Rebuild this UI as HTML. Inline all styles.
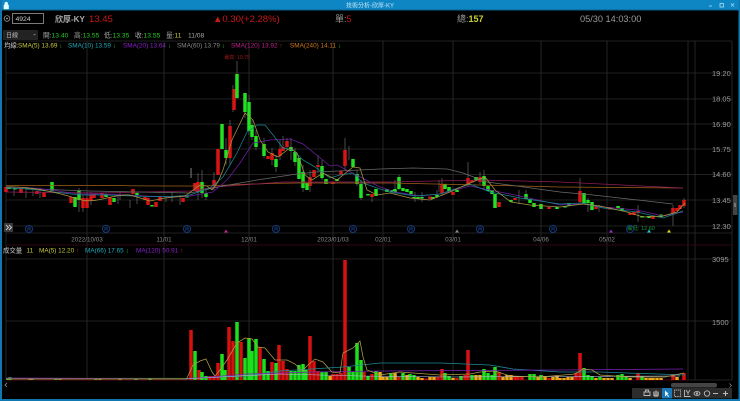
<!DOCTYPE html>
<html><head><meta charset="utf-8"><style>
html,body{margin:0;padding:0;background:#000;width:740px;height:401px;overflow:hidden}
svg{display:block;filter:blur(.35px)}
text{font-family:"Liberation Sans","Noto Sans CJK TC",sans-serif}
</style></head><body>
<svg width="740" height="401" viewBox="0 0 740 401" xmlns="http://www.w3.org/2000/svg">
<rect width="740" height="401" fill="#000"/>
<!-- window frame -->
<rect x="0" y="0" width="740" height="10" fill="#0f86c4"/>
<rect x="0" y="9.500" width="740" height="1" fill="#0a5f8c"/>
<rect x="0" y="0" width="2" height="401" fill="#0f78b0"/>
<rect x="738.500" y="0" width="1.500" height="401" fill="#0f78b0"/>
<rect x="0" y="399" width="740" height="2" fill="#0f78b0"/>
<path d="M4 5h4.500v4h-4.500zM4.900 5V3.500a1.300 1.300 0 0 1 2.700 0V5" fill="#dff" stroke="#dff" stroke-width=".6"/>
<text x="370" y="7.500" font-size="6" fill="#bfe4f5" text-anchor="middle">技術分析-欣厚-KY</text>
<path d="M709 6h3M720 3.500h3.500v3.500h-3.500zM731 3.500l3 3M734 3.500l-3 3" stroke="#bfe4f5" stroke-width=".7" fill="none"/>
<!-- header -->
<circle cx="7" cy="18.500" r="2.800" fill="none" stroke="#aaa" stroke-width=".7"/><circle cx="7" cy="18.500" r=".9" fill="#aaa"/>
<rect x="12.500" y="13.500" width="31" height="10" fill="#000" stroke="#999" stroke-width=".8"/>
<text x="15.500" y="21" font-size="6.800" fill="#ccc">4924</text>
<text x="55" y="21.800" font-size="8" font-weight="bold" fill="#aaa">欣厚-KY</text>
<text x="89" y="22" font-size="9.500" fill="#c81818">13.45</text>
<text x="213" y="22" font-size="9.500" fill="#c81818">▲0.30(+2.28%)</text>
<text x="335" y="22" font-size="9" fill="#999">單:<tspan fill="#c81818">5</tspan></text>
<text x="457" y="22" font-size="9" fill="#999">總:<tspan fill="#c8d030" font-weight="bold">157</tspan></text>
<text x="580" y="22" font-size="9.200" fill="#999">05/30 14:03:00</text>
<!-- row 2 -->
<rect x="3.500" y="30.500" width="34" height="9" fill="#222" stroke="#333" stroke-width=".6"/>
<text x="6" y="37.500" font-size="6" fill="#bbb">日線</text><path d="M33 34l1.500 1.500 1.500-1.500z" fill="#777"/>
<g font-size="6.700">
<text x="43" y="37.500" fill="#aaa">開:<tspan fill="#28c828">13.40</tspan></text>
<text x="74" y="37.500" fill="#aaa">高:<tspan fill="#28c828">13.55</tspan></text>
<text x="104" y="37.500" fill="#aaa">低:<tspan fill="#28c828">13.35</tspan></text>
<text x="135" y="37.500" fill="#aaa">收:<tspan fill="#28c828">13.55</tspan></text>
<text x="166" y="37.500" fill="#aaa">量:<tspan fill="#c8d030">11</tspan></text>
<text x="188" y="37.500" fill="#aaa">11/08</text>
</g>
<!-- grid -->
<path d="M6 41H732M6 73H732M6 99H732M6 124H732M6 149H732M6 174.500H732M6 200H732M6 226H732M6 233H732M6 259H732M6 321H732M6 380H732" stroke="#2c2c2c" stroke-width=".8" fill="none"/>
<path d="M6 41V380M87 41V380M164 41V380M249 41V380M333 41V380M383 41V380M453 41V380M541 41V380M607 41V380M688 41V380M695 41V380M732 41V380" stroke="#2c2c2c" stroke-width=".8" fill="none"/>
<path d="M6 245H732" stroke="#3a0a14" stroke-width=".8"/>
<path d="M6 380H688" stroke="#4a0a10" stroke-width="1"/>
<!-- row 3 legend -->
<g font-size="6.400">
<text x="4" y="47.500" fill="#ccc">均線:</text>
<text x="18" y="47.500" fill="#c8c83c">SMA(5) 13.69 <tspan fill="#28c828">↓</tspan></text>
<text x="68" y="47.500" fill="#20a8b8">SMA(10) 13.59 <tspan fill="#28c828">↓</tspan></text>
<text x="123" y="47.500" fill="#8a20c8">SMA(20) 13.64 <tspan fill="#28c828">↓</tspan></text>
<text x="177" y="47.500" fill="#888">SMA(60) 13.79 <tspan fill="#28c828">↓</tspan></text>
<text x="231" y="47.500" fill="#c02088">SMA(120) 13.92 <tspan fill="#d02020">↑</tspan></text>
<text x="290" y="47.500" fill="#d07818">SMA(240) 14.11 <tspan fill="#28c828">↓</tspan></text>
</g>
<!-- price labels -->
<g font-size="7.500" fill="#9a9a9a">
<text x="712" y="76">19.20</text><text x="712" y="101.500">18.05</text><text x="712" y="127">16.90</text><text x="712" y="152">15.75</text><text x="712" y="177">14.60</text><text x="712" y="203">13.45</text><text x="712" y="229">12.30</text>
<text x="712" y="262">3095</text><text x="712" y="325">1500</text>
</g>
<g font-size="6.300" fill="#888" text-anchor="middle">
<text x="87" y="241.500">2022/10/03</text><text x="164" y="241.500">11/01</text><text x="249" y="241.500">12/01</text><text x="333" y="241.500">2023/01/03</text><text x="383" y="241.500">02/01</text><text x="453" y="241.500">03/01</text><text x="541" y="241.500">04/06</text><text x="607" y="241.500">05/02</text>
</g>
<text x="237" y="59" font-size="5" fill="#a01818" text-anchor="middle">最高: 19.75</text>
<text x="627" y="230" font-size="5.500" fill="#189838">最低: 12.60</text>
<!-- wicks -->
<path d="M237 61V99M233 85V112M245 93V118M249 95V135M252 120V140M256 130V150M264 138V158M272 148V165M276 155V172M280 140V160M287 138V150M283 136V150M291 138V160M295 148V166M303 165V192M310 170V192M318 155V172M322 160V180M345 138V170M349 146V160M357 170V186M361 180V200M372 196V202M395 180V194M399 175V190M437 190V198M442 178V195M468 162V186M480 172V184M484 170V190M415 192V202M422 192V202M439 180V192M519 190V204M526 190V196M580 178V203M588 198V212M599 205V212M638 205V222M198 173V200M202 170V198M206 190V200M214 172V190M226 138V165M230 120V165M79 188V212M83 195V212M91 192V205M87 192V206M40 188V198M33 188V196M14 188V196M26 188V198M120 192V200M137 192V204M172 192V202M180 195V205M166 196V202M130 200V208M118 196V204M673 205V226M684 198V208" stroke="#5c5c5c" stroke-width=".8" fill="none"/>
<rect x="190.300" y="168" width="1.500" height="10" fill="#555"/>
<!-- red candles -->
<path d="M6 187V192M21 189V193M37 191V194M44 192V197M71 197V203M83 198V208M87 198V208M91 195V201M94 194V198M102 193V198M110 197V205M133 189V194M145 197V200M148 198V205M156 202V207M160 197V201M183 198V202M195 183V191M198 182V192M214 180V186M218 149V175M230 126V158M234 89V110M268 156V159M272 153V160M280 149V156M283 147V151M287 141V147M310 177V186M314 170V177M318 165V167M333 182V184M341 171V175M345 150V166M372 194V197M430 196.500V199M442 184V193M453 192V195M468 178V185M472 180V182.500M480 177V182M499 202V207M515 198V200M549 207V209M580 191V202M596 206.500V209M610 207V209.500M630 213V215M634 212V215M638 211V213M653 216V219M673 208V213.500M677 208V211M680 205V209M684 200V206" stroke="#d81414" stroke-width="3.500" fill="none"/>
<!-- green candles -->
<path d="M9 187V189M15 188V189.500M28 188V189.500M52 182V191M75 197V207M79 191V200M106 194V197M114 198V202M137 193V195M152 205V206.500M187 196V197.500M202 182V193M206 193V197M222 124V149M226 150V158M237 74V98M245 93V112M249 102V131M252 125V137M256 136V147M264 144V156M276 159V167M291 147V151M295 152V162M299 158V179M303 172V188M307 183V190M322 166V178M326 179V184M337 179V181M353 159V167M357 174V184M361 184V198M368 194V195.500M376 189V196M387 189V192M392 190V192M395 189V192M399 177V189M403 188V191M407 189V192M411 191V194M414 197V198.500M418 197V198.500M422 197V198.500M433 197V198.500M437 195V197M445 184V189M449 187V191M457 190V192M476 177V180M484 176V186M488 186V191M492 190V194M495 194V208M511 200V202M526 194V199M530 199V203M534 203V207M541 204V209M557 207V209M565 206V207.500M569 203V206M584 193V203M588 200V203M592 202V210M618 206V208.500M622 208V211M642 216V217.500M649 216V218M661 214.500V217" stroke="#22e022" stroke-width="3.500" fill="none"/>
<!-- MA lines -->
<g fill="none" stroke-width=".75">
<path d="M6 185.500C60 185 140 186 200 186C240 185 263 183 300 183L390 183L480 185L560 187L683 188" stroke="#a0601a"/>
<path d="M6 192L100 193L190 191L215 187L283 182L390 182L480 180L560 182L683 188" stroke="#901c58"/>
<path d="M6 188L90 191L190 193L223 186L257 180L297 174L317 172L380 169L413 168L447 169L463 173L487 182L560 192L593 195L673 204" stroke="#6a6a6a"/>
<path d="M6 187C50 187 70 195 90 194S170 199 190 196L213 192L227 180L240 163L253 143L270 140L290 139L303 144L330 166L337 165L370 182L380 187L395 192L420 196L440 194L470 186L490 190L520 196L560 205L583 204L603 207L637 210L663 216L683 212" stroke="#6a20a0"/>
<path d="M6 188C40 188 70 196 90 195S160 199 190 195L210 188L223 177L237 153L247 132L257 125L265 125L273 135L283 148L293 150L303 160L315 167L330 178L340 175L353 173L363 183L377 188L390 192L415 196L440 194L470 184L490 192L520 198L560 204L583 203L603 208L637 212L663 218L683 211" stroke="#188490"/>
<path d="M6 187C30 186 60 193 78 199S110 194 130 195L150 201L165 198L185 196L200 185L207 186L212 190L218 182L223 170L232 140L245 113L253 120L260 140L268 152L278 157L290 148L297 153L305 175L312 180L323 173L337 180L353 167L360 168L367 190L377 195L390 193L410 198L430 200L450 192L470 183L485 177L495 190L511 202L530 205L560 207L583 204L600 206L627 212L643 217L663 216L677 212L685 203" stroke="#a89440"/>
</g>
<!-- markers -->
<g fill="none" stroke="#143c88" stroke-width=".9">
<circle cx="29" cy="229" r="3.600"/><circle cx="106" cy="229" r="3.600"/><circle cx="187" cy="229" r="3.600"/><circle cx="276" cy="229" r="3.600"/><circle cx="353" cy="229" r="3.600"/><circle cx="411" cy="229" r="3.600"/><circle cx="480" cy="229" r="3.600"/><circle cx="553" cy="229" r="3.600"/><circle cx="630" cy="229" r="3.600"/>
</g>
<g font-size="4.500" fill="#2458b0" text-anchor="middle">
<text x="29" y="231">月</text><text x="106" y="231">月</text><text x="187" y="231">月</text><text x="276" y="231">月</text><text x="353" y="231">月</text><text x="411" y="231">月</text><text x="480" y="231">月</text><text x="553" y="231">月</text>
</g>
<path d="M226 229.500l2 3h-4z" fill="#c02890"/><path d="M457 229.500l2 3h-4z" fill="#888"/><path d="M611 229.500l2 3h-4z" fill="#8a28c8"/><path d="M649 229.500l2 3h-4z" fill="#28c0d0"/><path d="M669 229.500l2 3h-4z" fill="#d8d828"/>
<rect x="4" y="223" width="9" height="9" fill="#3a3a3a"/>
<path d="M6 225l2.500 2.500L6 230M9 225l2.500 2.500L9 230" fill="none" stroke="#ccc" stroke-width=".9"/>
<rect x="733" y="195" width="4.500" height="20" fill="#444"/><path d="M735 203v4" stroke="#aaa" stroke-width="1"/>
<!-- volume legend -->
<g font-size="6.400">
<text x="3" y="252.500" fill="#ccc">成交量</text>
<text x="26.500" y="252.500" fill="#c8d030">11</text>
<text x="39" y="252.500" fill="#c8c83c">MA(5) 12.20 <tspan fill="#d02020">↑</tspan></text>
<text x="85" y="252.500" fill="#20a8b8">MA(66) 17.65 <tspan fill="#28c828">↓</tspan></text>
<text x="136" y="252.500" fill="#8a20c8">MA(120) 50.91 <tspan fill="#d02020">↑</tspan></text>
</g>
<!-- volume bars -->
<path d="M7 378.500H186" stroke="#2a6a1a" stroke-width="1.300"/>
<path d="M8 378V380M10 377V380M32 378V380M56 378V380M96 378V380M136 378.500V380M150 378V380" stroke="#22c022" stroke-width="3"/>
<path d="M30 378V380M60 378V380M100 378V380M120 378V380" stroke="#a88018" stroke-width="3"/>
<path d="M191 330V380M199 370V380M210 376V380M214 376V380M218 363V380M229 327V380M233 341V380M241 342V380M260 347V380M272 362V380M279 345V380M283 361V380M287 369V380M310 336V380M314 361V380M318 371V380M333 374V380M337 374V380M341 373V380M345 260V380M364 372V380M372 374V380M399 377V380M426 378.500V380M438 377V380M442 369V380M457 378V380M465 375V380M468 350V380M499 372V380M515 376V380M518 377V380M522 377V380M549 378V380M576 373V380M580 353V380M638 373V380M673 374V380M684 373V380" stroke="#d81010" stroke-width="3.500" fill="none"/>
<path d="M195 351V380M202 372V380M206 376V380M222 354V380M225 370V380M237 322V380M245 358V380M249 338V380M252 351V380M256 339V380M264 359V380M268 371V380M276 363V380M291 371V380M295 371V380M299 365V380M303 364V380M306 370V380M322 372V380M326 372V380M349 367V380M353 372V380M357 343V380M361 360V380M368 376V380M376 371V380M391 373V380M403 373V380M410 374V380M414 375V380M445 373V380M449 376V380M461 376V380M472 375V380M484 369V380M488 373V380M492 375V380M495 367V380M530 374V380M534 374V380M541 375V380M584 368V380M588 375V380M592 376V380M600 377V380M618 375V380M622 374V380M626 377V380M642 376V380" stroke="#1ce01c" stroke-width="3.500" fill="none"/>
<path d="M330 376V380M380 372V380M383 377V380M387 377V380M395 373V380M407 375V380M418 377V380M422 378V380M430 377V380M434 377V380M453 378V380M476 375V380M480 375V380M503 377V380M507 375V380M511 375V380M538 377V380M545 376V380M553 377V380M557 376V380M560 378V380M564 378V380M568 377V380M572 377V380M596 378V380M604 378V380M608 378V380M612 378V380M630 378V380M646 378V380M650 378V380M653 378V380M657 378V380M661 378V380M677 377V380" stroke="#e8a818" stroke-width="3.500" fill="none"/>
<!-- volume MA lines -->
<g fill="none" stroke-width=".75">
<path d="M186 378.500L247 376L280 371L343 367L380 363L440 363L490 365L513 369L560 372L600 372L685 375" stroke="#1c8a98"/>
<path d="M6 378L186 379L247 374L313 372L380 371L560 370L683 369" stroke="#7a20b8"/>
<path d="M186 379L237 376L280 374L360 376L450 377L680 376" stroke="#b8b8e0" stroke-width=".6"/>
<path d="M6 379H186L187 378L193 365L200 361L206 359L212 372L215 376L220 370L227 360L237 343L245 338L252 339L258 347L265 348L275 360L287 360L295 364L302 371L308 365L315 359L323 362L332 372L340 373L343 353L353 348L360 341L363 357L367 370L380 375L400 372L440 375L470 374L480 372L495 371L510 376L540 377L575 374L583 369L592 370L600 375L630 377L665 377L684 373" stroke="#b09c44"/>
</g>
<!-- bottom controls -->
<path d="M7 383l-2 2 2 2" fill="none" stroke="#999" stroke-width=".8"/>
<rect x="671" y="383" width="46" height="4.500" rx="2" fill="#444"/>
<path d="M729.500 383.500l2 2-2 2" fill="none" stroke="#888" stroke-width=".7"/>
<rect x="632" y="388" width="100" height="10.500" fill="#2c2c2c"/>
<rect x="662" y="388" width="10" height="10.500" fill="#1878b8"/>
<path d="M665 390.500l0 6 1.500-1.500 2 2 .7-.7-2-2 1.500-.5z" fill="#e8f4ff"/>
<g fill="none" stroke="#bbb" stroke-width=".9">
<path d="M644 392h6v3.500h-6zM645.500 392v-2h3v2"/>
<path d="M654 396v-4.500M656 396v-5.500M658 396v-4.500M654 396h4" stroke-width="1.300"/>
<rect x="674.500" y="390" width="6" height="6.500" stroke-dasharray="1 .7"/>
<path d="M684.500 390v6.500h6M686 390l2 3 2-3M688 393v2"/>
<ellipse cx="697" cy="393.500" rx="3" ry="1.900"/><circle cx="697" cy="393.500" r=".7"/>
<circle cx="707" cy="393.500" r="2.700"/>
<path d="M713 393.500h5M723 393.500h5M725.500 391v5" stroke-width="1.100"/>
</g>
</svg>
</body></html>
